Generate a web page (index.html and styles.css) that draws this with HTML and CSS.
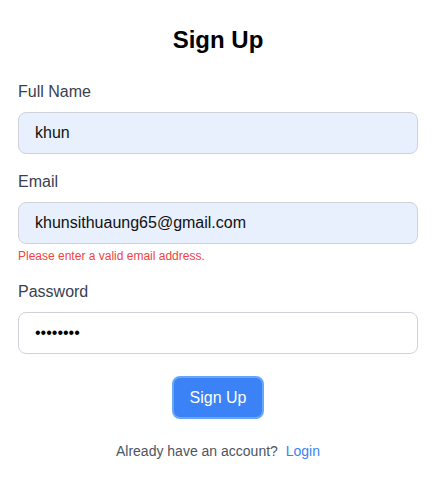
FILE: index.html
```html
<!DOCTYPE html>
<html>
<head>
<meta charset="utf-8">
<link rel="stylesheet" href="styles.css">
</head>
<body>
<div class="card">
  <h2 class="title">Sign Up</h2>
  <form class="form">
    <div class="field">
      <label class="label">Full Name</label>
      <div class="input filled">khun</div>
    </div>
    <div class="field">
      <label class="label">Email</label>
      <div class="input filled">khunsithuaung65@gmail.com</div>
      <p class="error">Please enter a valid email address.</p>
    </div>
    <div class="field">
      <label class="label">Password</label>
      <div class="input dots">••••••••</div>
    </div>
    <div class="actions">
      <button type="button" class="btn">Sign Up</button>
    </div>
  </form>
  <p class="footer">Already have an account? <a class="link">Login</a></p>
</div>
</body>
</html>
```
FILE: styles.css
```css
html, body {
  margin: 0;
  background: #ffffff;
  font-family: "Liberation Sans", Arial, sans-serif;
}
.card {
  width: 400px;
  margin: 0 0 0 18px;
  padding-top: 24px;
}
.title {
  margin: 0 0 24px;
  font-size: 24px;
  line-height: 32px;
  font-weight: 700;
  text-align: center;
  color: #000;
}
.form {
  display: flex;
  flex-direction: column;
}
.field {
  margin-bottom: 16px;
}
.label {
  display: block;
  font-size: 16px;
  line-height: 24px;
  color: #374151;
  margin-bottom: 8px;
}
.input {
  box-sizing: border-box;
  height: 42px;
  border: 1px solid #cfd3d9;
  border-radius: 8px;
  padding: 8px 16px;
  font-size: 16px;
  line-height: 24px;
  color: #111;
  background: #fff;
}
.input.filled {
  background: #e8f0fe;
}
.input.dots {
  color: #000;
}
.error {
  margin: 4px 0 0;
  font-size: 12px;
  line-height: 16px;
  color: #ef4444;
}
.actions {
  display: flex;
  justify-content: center;
  margin-top: 6px;
}
.btn {
  box-sizing: border-box;
  height: 43px;
  padding: 0 16px;
  border: 2px solid #6aa6f8;
  border-radius: 8px;
  background: #3b82f6;
  color: #fff;
  font-family: "Liberation Sans", Arial, sans-serif;
  font-size: 16px;
}
.footer {
  margin: 22px 0 0;
  text-align: center;
  font-size: 14px;
  line-height: 20px;
  color: #4b5563;
}
.link {
  margin-left: 4px;
  color: #3b82f6;
}
```
